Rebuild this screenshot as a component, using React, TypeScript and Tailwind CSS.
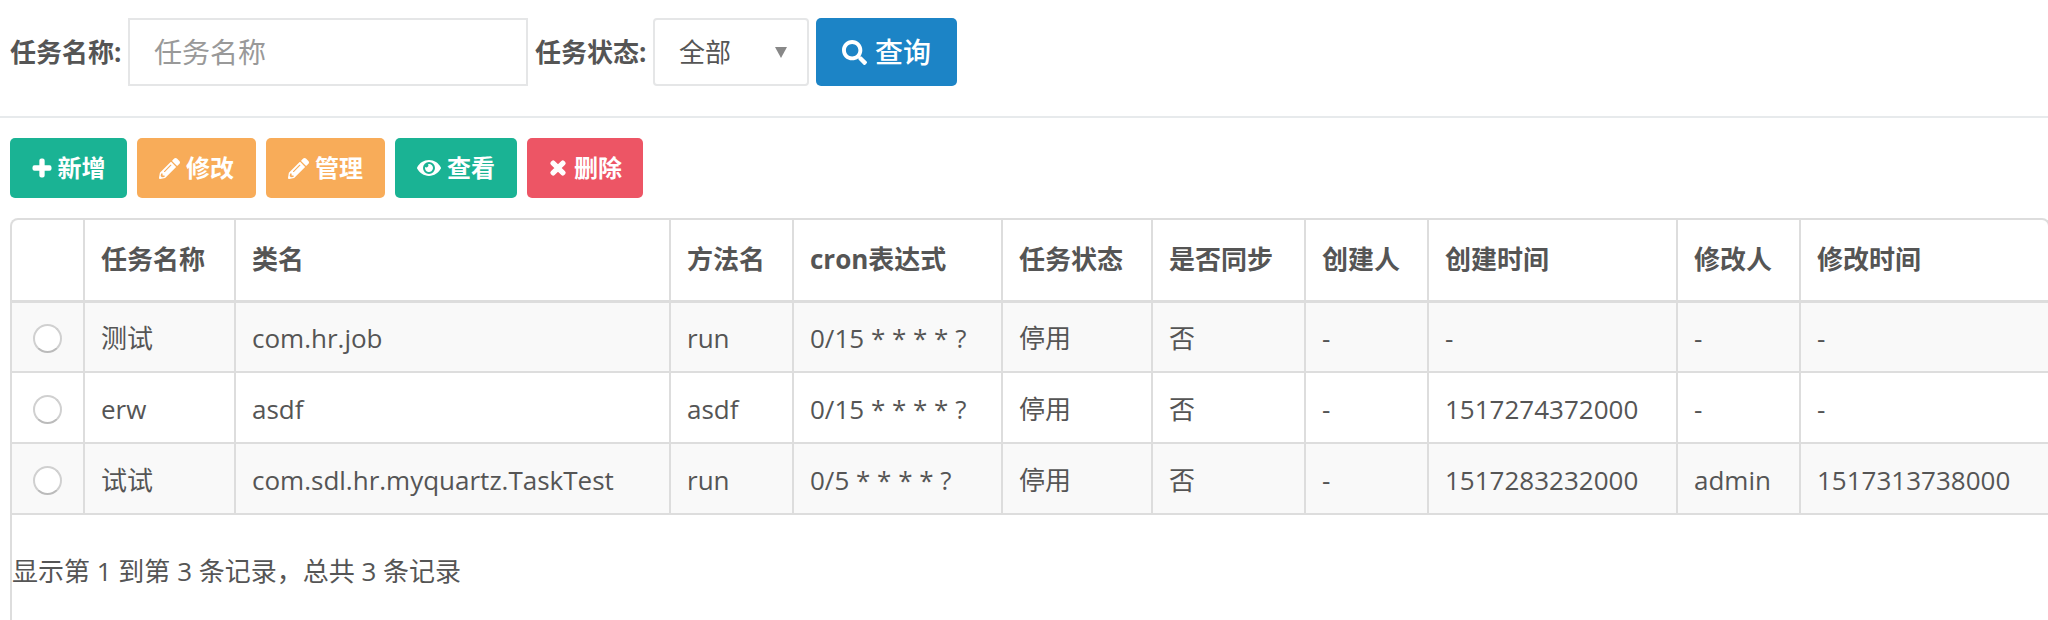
import React from "react";
import { FaPlus, FaPencilAlt, FaEye, FaTimes, FaSearch } from "react-icons/fa";

const widths = [72, 151, 435, 123, 209, 150, 153, 123, 249, 123, 248];
const heads = ["", "任务名称", "类名", "方法名", "cron表达式", "任务状态", "是否同步", "创建人", "创建时间", "修改人", "修改时间"];
const rows = [
  ["测试", "com.hr.job", "run", "0/15 * * * * ?", "停用", "否", "-", "-", "-", "-"],
  ["erw", "asdf", "asdf", "0/15 * * * * ?", "停用", "否", "-", "1517274372000", "-", "-"],
  ["试试", "com.sdl.hr.myquartz.TaskTest", "run", "0/5 * * * * ?", "停用", "否", "-", "1517283232000", "admin", "1517313738000"],
];

const buttons = [
  { label: "新增", icon: <FaPlus size={20} className="stroke-[40]" />, cls: "bg-[#1ab394] w-[117px]" },
  { label: "修改", icon: <FaPencilAlt size={21} />, cls: "bg-[#f8ac59] w-[119px]" },
  { label: "管理", icon: <FaPencilAlt size={21} />, cls: "bg-[#f8ac59] w-[119px]" },
  { label: "查看", icon: <FaEye size={24} />, cls: "bg-[#1ab394] w-[122px]" },
  { label: "删除", icon: <FaTimes size={20} className="stroke-[40]" />, cls: "bg-[#ed5565] w-[116px]" },
];

export default function App() {
  return (
    <div className="h-[620px] w-[2048px] overflow-hidden bg-white font-['Open_Sans','Noto_Sans_CJK_SC',sans-serif] text-[#555]">
      <div className="flex h-[118px] items-start border-b-2 border-[#e7eaec] pt-[18px] pl-[10px]">
        <span className="mt-[19px] w-[118px] text-[26px] leading-[30px] font-bold whitespace-nowrap">任务名称:</span>
        <div className="flex h-[68px] w-[400px] items-center border-2 border-[#e5e6e7] pl-[24px] text-[28px] text-[#999]">任务名称</div>
        <span className="mt-[19px] ml-[7px] w-[118px] text-[26px] leading-[30px] font-bold whitespace-nowrap">任务状态:</span>
        <div className="flex h-[68px] w-[156px] items-center justify-between rounded-[4px] border-2 border-[#e5e6e7] pr-[20px] pl-[24px] text-[26px]">
          <span>全部</span>
          <span className="h-0 w-0 border-x-[6px] border-t-[11px] border-x-transparent border-t-[#888]"></span>
        </div>
        <div className="ml-[7px] flex h-[68px] w-[141px] items-center justify-center gap-[8px] rounded-[5px] bg-[#1c84c6] text-[28px] font-medium text-white">
          <FaSearch size={25} />
          <span>查询</span>
        </div>
      </div>

      <div className="mt-[20px] flex gap-[10px] pl-[10px]">
        {buttons.map((b, i) => (
          <div key={i} className={`flex h-[60px] items-center justify-center gap-[6px] rounded-[5px] text-[24px] font-bold text-white ${b.cls}`}>
            {b.icon}
            <span>{b.label}</span>
          </div>
        ))}
      </div>

      <div className="mt-[20px] ml-[10px] h-[402px] w-[2040px] rounded-t-[8px] border-x-2 border-t-2 border-[#ddd]">
        <table className="w-[2036px] table-fixed border-collapse text-left text-[26px]">
          <colgroup>
            {widths.map((w, i) => (
              <col key={i} style={{ width: w }} />
            ))}
          </colgroup>
          <thead>
            <tr className="h-[81px]">
              {heads.map((h, i) => (
                <th key={i} className="border-r-2 border-b-[3px] border-[#ddd] pl-[16px] font-bold whitespace-nowrap last:border-r-0">{h}</th>
              ))}
            </tr>
          </thead>
          <tbody>
            {rows.map((r, i) => (
              <tr key={i} className={i % 2 === 0 ? "h-[71px] bg-[#f9f9f9]" : "h-[71px] bg-white"}>
                <td className="border-r-2 border-b-2 border-[#ddd] pt-[3px]">
                  <div className="mx-auto h-[29px] w-[29px] rounded-full border-2 border-[#d0d0d0] border-b-[#bbb] bg-white"></div>
                </td>
                {r.map((c, j) => (
                  <td key={j} className="border-r-2 border-b-2 border-[#ddd] pt-[3px] pl-[16px] whitespace-nowrap last:border-r-0">{c}</td>
                ))}
              </tr>
            ))}
          </tbody>
        </table>
        <div className="mt-[38px] text-[26px] leading-[36px]">显示第 1 到第 3 条记录，总共 3 条记录</div>
      </div>
    </div>
  );
}
